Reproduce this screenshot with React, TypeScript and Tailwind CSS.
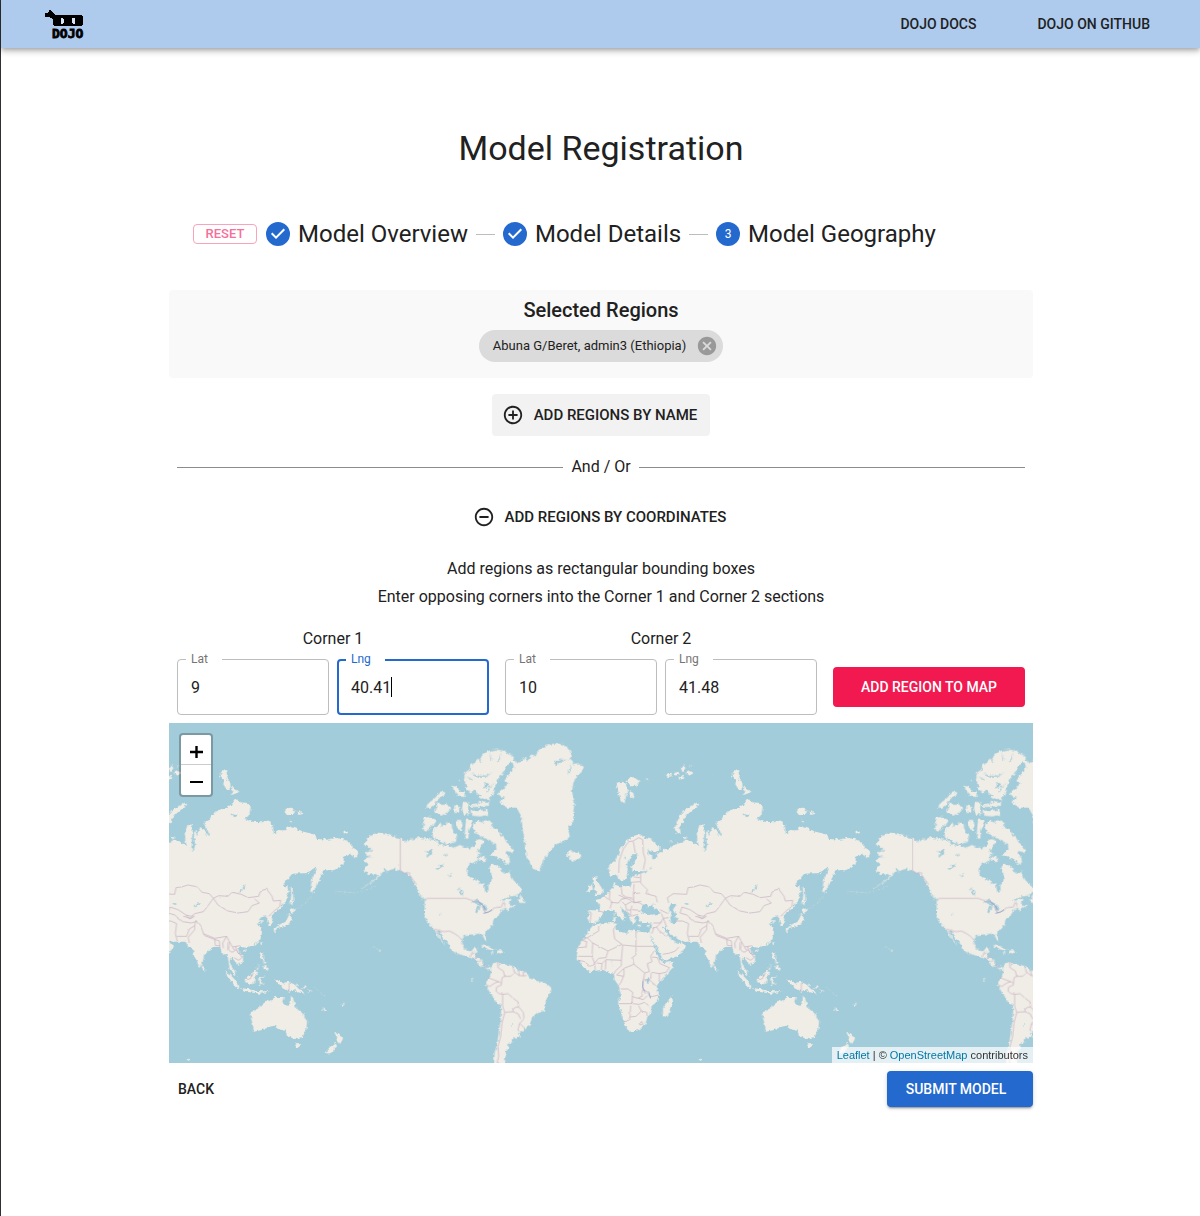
import React, { useState } from "react";
import { MdAddCircleOutline, MdCancel, MdRemoveCircleOutline } from "react-icons/md";

/* ---------- Logo ---------- */

function DojoLogo() {
  return (
    <svg viewBox="0 0 40 32" className="h-8 w-10" role="img" aria-label="Dojo">
      <path
        d="M1 5h3V4h1V2h2v1h1v1h1v1h1v1h1v1h27v1h1v9h-1v1H10v-1H9v-6H8v-1H6V9H1z"
        fill="#000"
      />
      <path d="M17 10h2v1h1v4h-1v1h-2zM28 10h3v6h-2v-1h-1z" fill="#d5e5f7" />
      <text
        x="8"
        y="30"
        fontFamily="DejaVu Sans Mono, monospace"
        fontWeight="700"
        fontSize="13"
        stroke="#000"
        strokeWidth="0.8"
      >
        DOJO
      </text>
    </svg>
  );
}

/* ---------- World map ---------- */

const americasLand = [
  "M10,362L22,352 20,345 40,335 55,329 75,334 95,339 121,346 133,354 140,358 150,350 163,348 178,342 190,350 200,346 225,352 240,366 262,368 282,374 300,366 312,372 330,376 344,366 352,350 362,348 372,352 368,366 360,374 352,384 362,392 350,404 356,410 345,418 330,422 321,432 320,448 330,464 345,470 362,482 372,486 374,500 380,510 386,502 385,486 394,474 396,455 388,440 391,424 404,424 418,432 424,444 433,456 445,450 448,440 452,458 462,474 474,484 484,498 483,510 470,518 446,520 425,530 424,536 440,528 455,528 452,534 446,540 456,550 466,546 462,552 448,560 438,562 440,554 432,556 424,564 420,574 412,580 400,588 398,606 388,618 378,624 374,634 380,648 380,656 374,650 368,636 355,632 340,634 322,635 308,642 306,660 312,676 325,684 336,684 340,676 350,674 350,684 346,692 345,704 358,704 368,712 366,728 372,734 384,730 392,734 390,740 380,736 368,734 358,724 346,710 330,702 316,698 300,694 275,682 270,668 255,652 246,638 238,624 230,620 236,634 246,652 256,666 248,660 236,642 228,628 222,616 208,606 200,594 193,580 194,556 194,534 200,530 186,520 176,508 168,488 158,470 144,456 132,446 118,442 98,438 82,446 74,436 66,450 58,460 40,474 20,488 6,498 4,496 24,484 44,466 56,458 44,452 30,456 20,446 10,444 16,432 24,424 14,416 16,404 36,402 20,398 12,388 22,384 34,386 36,376 20,372Z",
  "M330,130L345,118 360,104 372,92 388,84 408,80 430,82 452,94 462,104 456,118 440,128 430,146 420,160 410,176 404,196 396,216 388,232 366,224 352,214 344,200 334,212 322,204 318,188 312,168 316,148 330,138Z",
  "M328,245L345,246 360,236 380,240 388,236 386,248 352,252 332,252ZM332,262L350,264 382,260 384,276 360,280 335,278Z",
  "M240,210L256,204 252,218 240,224 230,232 222,246 210,254 198,254 208,238 222,228Z",
  "M232,236L246,246 262,244 270,256 262,268 244,278 226,272 222,262 232,258Z",
  "M274,188L290,190 300,206 312,206 318,220 306,222 292,216 284,206Z",
  "M282,250L290,246 298,254 296,270 284,270ZM310,236L326,238 324,256 326,272 312,276 306,256ZM296,170L302,172 300,180Z",
  "M190,284L212,282 230,292 222,304 210,314 198,326 188,322 192,304Z",
  "M240,300L246,312 262,298 274,304 280,326 290,340 288,356 270,362 248,360 232,350 220,346 216,328 226,314Z",
  "M288,292L302,290 308,304 304,322 292,318ZM318,290L334,290 332,310 324,322 326,340 320,350 314,336 316,310Z",
  "M344,300L356,292 366,300 374,292 388,292 398,302 396,314 410,318 420,332 432,344 440,358 452,368 460,382 456,392 444,384 436,390 448,404 450,418 440,424 430,410 416,408 404,398 392,398 400,386 410,380 408,366 396,356 380,348 366,340 346,330 340,316Z",
  "M362,398L372,402 382,414 368,414 356,410Z",
  "M455,112L462,110 470,122 484,112 498,104 502,116 514,94 530,100 532,84 550,72 580,62 612,64 625,78 636,96 628,108 645,124 660,124 672,132 664,148 652,156 640,180 636,205 644,236 640,268 640,295 622,312 630,340 615,354 585,366 570,385 556,400 546,420 538,446 518,436 505,410 496,385 494,350 488,320 484,280 470,254 440,254 418,236 432,226 412,212 428,200 445,180 434,168 452,150 462,130Z",
  "M622,390L632,384 642,390 656,386 665,398 656,408 640,414 628,408 632,400 620,398Z",
  "M392,734L400,722 414,716 418,724 432,724 455,728 470,738 482,746 500,748 508,764 530,774 556,780 572,792 574,804 560,824 556,846 552,864 530,872 516,882 512,898 498,916 490,926 476,924 480,938 472,946 456,946 456,958 444,964 446,974 436,984 440,996 432,1008 434,1024 402,1024 404,990 412,960 416,930 422,890 424,850 404,834 392,812 378,788 380,770 390,762 394,748Z",
  "M362,668L376,665 392,673 408,680 396,683 380,677ZM410,683L424,681 434,688 414,691ZM390,687L400,687 399,692ZM474,534L484,514 486,526 498,540 480,540ZM178,512L192,528 186,528ZM56,680L63,682 60,687ZM333,768L339,770 335,775Z",
];

const oldWorldLand = [
  "M146,432L158,418 172,404 180,384 190,366 204,350 222,338 240,334 256,344 276,350 298,370 298,382 284,388 268,384 262,378 266,392 276,398 278,410 292,404 290,392 304,388 316,376 326,380 340,366 360,360 378,350 400,358 416,370 412,350 410,328 418,308 430,304 434,320 432,348 430,380 436,384 442,366 438,340 440,318 448,340 456,312 470,320 480,342 482,330 474,312 468,296 484,290 492,276 510,262 534,254 552,244 562,228 576,238 598,240 608,252 604,276 590,288 612,296 640,298 664,292 674,306 678,332 694,322 714,322 720,308 748,318 766,326 800,334 806,348 840,350 860,344 884,348 904,358 920,378 932,386 926,404 914,398 900,392 886,402 888,420 876,430 858,442 826,442 818,464 804,490 793,513 788,495 792,468 806,442 803,432 782,450 733,452 713,475 703,488 718,490 722,508 713,535 698,555 683,568 668,575 675,595 671,610 661,606 661,590 653,580 641,582 631,592 648,592 630,602 643,625 638,648 618,665 595,674 578,672 568,680 585,698 585,715 571,726 561,715 549,702 545,718 553,735 563,748 565,758 555,752 545,738 541,715 539,695 527,698 521,680 513,672 498,672 481,684 467,698 465,715 457,732 449,722 439,698 433,676 421,672 413,656 391,656 370,656 352,648 346,640 334,636 326,624 316,608 308,614 322,634 332,648 344,658 356,664 360,656 378,668 368,688 350,700 330,708 310,714 304,700 290,672 278,650 270,632 274,616 276,602 262,600 245,600 236,588 238,580 222,582 228,594 220,606 214,592 208,578 198,564 184,552 186,566 196,582 204,586 194,584 192,596 186,590 172,578 164,562 152,560 142,564 130,566 128,574 118,586 112,598 98,602 88,598 84,590 88,562 108,562 118,564 120,548 108,532 118,528 134,520 150,502 158,492 164,478 168,486 178,490 212,490 216,478 214,468 222,456 240,452 256,446 240,444 218,444 214,430 228,410 232,394 218,394 208,410 198,430 206,446 196,468 188,478 180,474 172,452 164,456 150,458Z",
  "M100,606L120,604 144,598 160,598 168,602 166,618 180,626 204,632 208,620 228,624 252,628 270,628 272,644 284,672 290,692 302,712 310,720 328,718 342,716 336,736 318,758 298,780 290,792 296,808 296,832 274,850 274,866 262,880 258,898 246,914 232,922 206,926 198,912 190,888 182,862 174,840 182,816 176,788 164,770 162,752 146,750 126,740 104,744 90,748 72,734 58,716 50,704 54,672 66,652 82,632 88,620Z",
  "M334,820L339,832 331,858 322,882 309,879 309,856 322,838Z",
  "M98,462L112,460 108,474 118,484 128,500 126,514 104,518 112,506 100,498 106,486 98,478ZM84,488L96,484 98,500 82,508Z",
  "M168,180L186,176 200,184 204,200 198,220 194,242 182,232 176,212ZM204,168L220,162 238,174 230,188 214,190 200,176ZM210,200L222,214 218,228 208,212Z",
  "M318,156L334,152 336,160 322,162ZM342,150L356,146 358,156 346,158ZM362,140L372,126 376,136 368,148ZM376,150L390,144 400,148 386,158ZM356,162L370,158 368,168 358,170ZM388,126L396,128 390,132ZM258,166L266,168 260,171ZM460,150L464,152 460,154Z",
  "M344,318L350,298 360,278 372,262 392,250 412,238 417,246 394,264 378,278 368,296 360,314 362,334 348,328Z",
  "M520,146L532,142 540,156 536,168 546,176 548,196 536,200 526,184 528,168 516,158ZM552,188L572,208 552,216Z",
  "M708,260L722,254 742,262 736,276 716,276ZM748,264L766,272 754,276ZM724,290L732,292 730,300ZM886,328L896,324 902,330 890,332ZM370,340L380,344 374,350ZM328,354L334,352 334,360Z",
  "M728,490L734,498 736,530 732,548 727,540 730,514ZM724,562L730,552 744,562 732,570ZM726,572L732,588 722,604 700,612 684,616 686,624 680,628 677,616 700,604 716,594 721,576Z",
  "M635,660L643,656 640,670ZM588,682L596,679 593,689ZM463,726L472,738 468,744 461,740ZM635,690L645,687 645,702 653,716 639,709ZM646,728L662,732 658,744 647,738ZM645,714L657,720 650,726ZM625,740L637,722 629,741Z",
  "M530,745L546,754 564,774 577,798 560,789 543,766ZM576,795L600,798 620,803 640,805 663,805 640,812 600,807Z",
  "M590,766L604,762 618,744 631,746 622,762 622,776 610,784 592,778ZM631,768L652,760 637,772 649,786 640,782 633,792Z",
  "M682,772L694,770 704,782 720,776 744,786 758,800 770,812 750,808 736,800 724,806 708,796 698,788ZM762,796L776,788 770,800Z",
  "M609,868L631,856 645,842 661,832 669,836 679,822 707,822 703,840 719,850 727,844 729,816 737,832 745,856 765,872 777,896 775,918 763,942 739,948 721,940 709,922 697,920 681,908 659,912 639,922 617,926 615,906 609,886ZM740,960L757,961 752,975 743,971Z",
  "M860,926L872,937 886,944 877,963 866,951ZM862,959L867,970 848,991 833,991 842,976ZM822,852L837,864 830,865ZM879,847L891,837 886,849ZM777,797L793,806 788,809ZM161,583L167,583 166,595 159,593ZM161,569L166,571 163,581ZM231,605L245,605 236,611ZM261,608L271,603 266,612ZM415,1007L425,1008 422,1015Z",
];

const islandChains =
  "M690,0M863,505L900,508 930,508 962,498 985,488M737,560L760,550 775,536 790,520M797,790L815,806 836,824M620,738L634,718M880,848L884,842M975,670L992,680M155,712L157,728";

const americasWater =
  "M194,384L206,386 220,378 216,390 206,400 198,398 204,390ZM226,436L240,430 252,422 246,434 232,440ZM294,494L300,496 310,516 302,516ZM334,536L348,530 360,536 372,546 360,546 348,542ZM350,552L360,546 356,562 350,574 346,566ZM366,548L376,548 384,556 376,564 370,560ZM240,572L246,576 242,578ZM454,902L460,906 454,908ZM252,396L264,392 258,400ZM264,458L278,450 270,462ZM334,150L352,158 376,160 396,146 378,164 350,164ZM376,176L390,190 372,196ZM580,118L602,110 628,112 604,116 588,126ZM622,156L634,120 630,146ZM350,90L366,116 362,118ZM388,86L396,112 392,112ZM424,84L418,116 414,114ZM318,160L338,168 336,172ZM404,176L382,208 380,204Z";

const oldWorldWater =
  "M244,570L242,558 250,544 260,546 262,554 272,548 276,544 284,540 276,550 292,562 304,572 284,574 262,576ZM326,556L332,544 350,542 344,552 338,562 350,572 344,580 352,584 350,600 336,600 330,588 334,576ZM376,540L386,542 378,546ZM436,550L444,542 460,540 446,548ZM568,508L582,498 592,482 590,494 578,508ZM258,768L270,766 270,776 262,780ZM250,442L262,444 256,452ZM272,428L276,438 270,434ZM196,400L198,410 193,404ZM550,270L572,274 560,284Z";

const americasBorders =
  "M121,346V442L132,452 144,448 154,464 170,484M200,526H318L336,532 356,536 372,556 376,570 396,562 402,554 424,552 428,540 434,540 434,550M222,618L252,626 268,624 284,632 296,640 306,652M332,700L336,688 344,688M344,706L358,700M356,716L366,712M372,722L374,734M412,716L414,734 430,744 434,760 426,764 424,786 410,792 408,804 418,812 428,814M434,760L452,760 464,748 460,736M464,748L478,758 500,758M476,744L478,758M490,746L490,760M384,764L400,770 416,776 404,780 390,790 378,786M416,776L424,780M428,814L444,812 462,828 474,836 476,852 462,854 458,866 434,868 428,850ZM476,852L490,868 492,888 478,902 474,924M458,866L474,872 482,888M480,902L494,916M434,868L426,900 422,940 414,970 416,1000 410,1024";

const oldWorldBorders = [
  "M326,540L322,524 340,512 380,514 384,494 400,492 420,486 450,492 462,508 484,512 496,526 480,548 466,566 440,572 430,580 414,576 390,560 366,552 360,570",
  "M496,526L512,518 540,520 552,508 580,514 600,524 632,520 636,504 656,498 672,520 676,534 698,532 696,550 678,564 662,580M496,526L510,546 540,564 570,570 600,566 612,548 634,540 620,528",
  "M360,570L380,576 404,596 430,600 444,596M350,594L368,594 386,602 382,632 388,654M386,640L416,640 424,618 440,608 444,592 462,618 466,632 500,646 536,640 544,656 554,672 576,668M440,608L440,620 420,644 424,660M466,632L470,638 502,650M500,648L502,668 516,668M502,650L514,654 516,676M536,640L524,660 526,676M544,656L542,680 550,688 562,680 574,690 582,704 572,712 558,704M554,672L560,684M562,670L568,684 580,696M414,576L424,588 440,580M406,580L430,586 436,576",
  "M176,450L178,412 190,378 206,356 220,354 236,344 248,350M220,356L226,390M248,350L250,390 256,410 250,440M242,450L242,480 262,500 258,512 288,520 292,538M216,478L240,476M222,462L240,464M222,484L220,512 240,510M184,492L186,514 198,522 220,526M220,512L222,540 244,534M150,504L148,528 156,538M152,538L176,540 184,528 198,526M134,520L146,530M156,538L150,556M176,516L198,526 220,534M186,536L196,546 214,536 240,540 248,546M196,546L200,560 212,562 216,548M216,560L240,562M212,562L212,580 234,574M198,562L208,574M90,566L94,572 90,596M118,564L132,568",
  "M304,572L310,586 326,584M300,560L324,572M310,586L300,600 280,600M276,616L290,612 306,596M310,586L320,612M290,612L296,622 320,640M282,612L276,632M308,694L330,690 346,684 356,672M724,780V806M594,764L606,768 616,750",
  "M116,606L116,624 82,644 66,652M82,644L98,660 144,684 186,664 164,648 160,618 168,610M228,624V670L188,666M230,670H282M98,660L96,700 54,700M66,652L80,656 78,672 54,674M144,684L138,704 116,706 104,720M96,700L104,722 90,730 74,716 56,712M104,722L106,742M124,742L126,722 138,710 184,712 188,666M126,722L110,720M138,712L136,740M184,712L184,728 168,742 162,752M228,670L228,696 216,704 222,724 192,736 170,756M222,724L244,742 254,750 268,746 262,722 276,716 272,700 282,684M276,702L292,704 300,722 328,734 318,748 298,752 276,748M298,752L298,776M254,750L250,770 270,772 290,790M274,750L272,768M250,770L248,796 258,812M192,738L192,756 184,776 176,788M170,756L190,760M182,798L204,798 218,808 216,842H176M216,820L232,826 246,820 248,800 262,806 270,822 296,816M216,842L238,844 254,838 266,848M212,848L210,882 206,892 192,892M210,882L228,880 244,864 236,848M244,864L260,868 262,880M238,900L246,896 248,904 240,906ZM232,826L250,830 262,818",
];

function World() {
  return (
    <>
      <g fill="#f0ede6" filter="url(#coastline)">
        <g transform="translate(573 0)">
          {americasLand.map((d) => (
            <path key={d} d={d} />
          ))}
          <path d={americasWater} fill="#a3ccda" />
        </g>
        <g transform="translate(1173 0)">
          {oldWorldLand.map((d) => (
            <path key={d} d={d} />
          ))}
          <path d={oldWorldWater} fill="#a3ccda" />
          <path d={islandChains} fill="none" stroke="#cddcdd" strokeWidth="2" strokeDasharray="7 6" />
        </g>
      </g>
      <g fill="none" stroke="#c8b2c4" strokeWidth="2.2" strokeLinejoin="round" filter="url(#frontier)">
        <path transform="translate(573 0)" d={americasBorders} />
        <g transform="translate(1173 0)">
          {oldWorldBorders.map((d) => (
            <path key={d} d={d} />
          ))}
        </g>
      </g>
      <g fill="none" stroke="#8da3cc" strokeWidth="2.4" strokeLinejoin="round">
        <path transform="translate(573 0)" d="M356,536L370,548 376,560M370,571L386,567 396,560" />
        <path transform="translate(1173 0)" d="M249,774L248,792 254,804M266,806L272,826" />
      </g>
    </>
  );
}

function WorldMap() {
  return (
    <svg
      viewBox="0 0 2592 1020"
      preserveAspectRatio="xMidYMin slice"
      className="block h-full w-full"
      role="img"
      aria-label="World map"
    >
      <defs>
        <filter id="coastline" x="-2%" y="-2%" width="104%" height="104%">
          <feTurbulence type="fractalNoise" baseFrequency="0.1" numOctaves="2" seed="4" />
          <feDisplacementMap in="SourceGraphic" scale="13" xChannelSelector="R" yChannelSelector="G" />
        </filter>
        <filter id="frontier" x="-2%" y="-2%" width="104%" height="104%">
          <feTurbulence type="fractalNoise" baseFrequency="0.05" numOctaves="1" seed="9" />
          <feDisplacementMap in="SourceGraphic" scale="7" xChannelSelector="R" yChannelSelector="G" />
        </filter>
      </defs>
      {[-1536, 0, 1536].map((shift) => (
        <g key={shift} transform={`translate(${shift} 0)`}>
          <World />
        </g>
      ))}
    </svg>
  );
}

function MapPanel() {
  return (
    <div className="relative h-[340px] overflow-hidden bg-[#a3ccda]">
      <WorldMap />
      <div className="absolute top-2.5 left-2.5 flex flex-col rounded border-2 border-black/25 bg-white bg-clip-padding">
        <button type="button" aria-label="Zoom in" className="flex h-[30px] w-[30px] items-center justify-center border-b border-[#ccc]">
          <svg viewBox="0 0 14 14" className="mt-1 h-3.5 w-3.5 stroke-black" strokeWidth="2.4">
            <path d="M7.5 1v12M1 7h13" />
          </svg>
        </button>
        <button type="button" aria-label="Zoom out" className="flex h-[30px] w-[30px] items-center justify-center">
          <svg viewBox="0 0 14 14" className="mt-1 h-3.5 w-3.5 stroke-black" strokeWidth="2">
            <path d="M1 7h13" />
          </svg>
        </button>
      </div>
      <p className="absolute right-0 bottom-0 bg-white/70 px-[5px] font-['Liberation_Sans',sans-serif] text-[11px] leading-4 text-[#333]">
        <a href="#leaflet" className="text-[#0078a8]">Leaflet</a> | ©{" "}
        <a href="#openstreetmap" className="text-[#0078a8]">OpenStreetMap</a> contributors
      </p>
    </div>
  );
}

/* ---------- Stepper ---------- */

function StepIcon({ step, done }: { step: number; done: boolean }) {
  if (done) {
    return (
      <svg viewBox="0 0 24 24" className="h-6 w-6 shrink-0 fill-[#2469ce]" aria-hidden="true">
        <path d="M12 0a12 12 0 1 0 0 24 12 12 0 0 0 0-24zm-2 17l-5-5 1.4-1.4 3.6 3.6 7.6-7.6L19 8l-9 9z" />
      </svg>
    );
  }
  return (
    <span className="flex h-6 w-6 shrink-0 items-center justify-center rounded-full bg-[#2469ce] text-xs text-white">
      {step}
    </span>
  );
}

const steps = [
  { label: "Model Overview", done: true },
  { label: "Model Details", done: true },
  { label: "Model Geography", done: false },
];

function Stepper() {
  return (
    <div className="mt-[30px] flex items-center px-6 py-6">
      <button
        type="button"
        className="mr-[9px] h-5 w-16 rounded border border-[#f9a3bd] text-[13px] leading-4 font-medium text-[#f5709a]"
      >
        RESET
      </button>
      <ol className="flex items-center gap-2">
        {steps.map((step, i) => (
          <li key={step.label} className="flex items-center gap-2">
            {i > 0 && <span className="h-px w-[19px] bg-[#bdbdbd]" />}
            <StepIcon step={i + 1} done={step.done} />
            <span className="text-2xl leading-6 whitespace-nowrap">{step.label}</span>
          </li>
        ))}
      </ol>
    </div>
  );
}

/* ---------- Coordinates form ---------- */

type FieldProps = { id: string; label: string; initial: string; active?: boolean };

function CoordinateField({ id, label, initial, active = false }: FieldProps) {
  const [value, setValue] = useState(initial);
  return (
    <div className="relative min-w-0 flex-1">
      <label
        htmlFor={id}
        className={
          active
            ? "absolute -top-2 left-[9px] bg-white pr-3.5 pl-[5px] text-xs leading-4 text-[#2469ce]"
            : "absolute -top-2 left-[9px] bg-white pr-3.5 pl-[5px] text-xs leading-4 text-[#757575]"
        }
      >
        {label}
      </label>
      <input
        id={id}
        type="text"
        value={value}
        onChange={(e) => setValue(e.target.value)}
        className={
          active
            ? "h-14 w-full rounded border-2 border-[#2469ce] px-3 text-base outline-none"
            : "h-14 w-full rounded border border-[#bdbdbd] px-[13px] text-base outline-none"
        }
      />
      {active && (
        <span className="pointer-events-none absolute top-[18px] left-3.5 flex items-center" aria-hidden="true">
          <span className="invisible text-base leading-5">{value}</span>
          <span className="h-5 w-px bg-black" />
        </span>
      )}
    </div>
  );
}

function Corner({ number, lat, lng, active }: { number: number; lat: string; lng: string; active?: boolean }) {
  return (
    <fieldset className="min-w-0 flex-[312]">
      <legend className="mx-auto block text-base leading-7">Corner {number}</legend>
      <div className="mt-1.5 flex gap-2">
        <CoordinateField id={`lat-${number}`} label="Lat" initial={lat} />
        <CoordinateField id={`lng-${number}`} label="Lng" initial={lng} active={active} />
      </div>
    </fieldset>
  );
}

/* ---------- Page ---------- */

export default function App() {
  return (
    <div className="min-h-screen border-l border-[#303034] bg-white font-[Roboto,sans-serif] text-[#212121]">
      <header className="flex h-12 items-center justify-between bg-[#aecbee] pr-[50px] pl-[43px] shadow-[0_2px_4px_-1px_rgba(0,0,0,0.2),0_4px_5px_0_rgba(0,0,0,0.14),0_1px_10px_0_rgba(0,0,0,0.12)]">
        <a href="#home">
          <DojoLogo />
        </a>
        <nav className="flex gap-[61px] text-sm font-medium">
          <a href="#docs">DOJO DOCS</a>
          <a href="#github">DOJO ON GITHUB</a>
        </nav>
      </header>

      <div className="pl-px">
        <main className="mx-auto max-w-[864px] pt-20 pb-16">
          <h1 className="text-center text-[34px] leading-10">Model Registration</h1>

          <Stepper />

          <section className="mt-5 rounded bg-[#f9f9f9] pt-1.5 pb-4 text-center">
            <h2 className="text-xl leading-7 font-medium">Selected Regions</h2>
            <div className="mt-1.5 inline-flex h-8 items-center gap-2.5 rounded-full bg-[#dbdbdb] pr-[5px] pl-3.5 align-top">
              <span className="text-[13px]">Abuna G/Beret, admin3 (Ethiopia)</span>
              <button type="button" aria-label="Remove region">
                <MdCancel size={22} className="block text-[#999]" />
              </button>
            </div>
          </section>

          <div className="mt-4 flex justify-center">
            <button
              type="button"
              className="flex h-[42px] items-center gap-2.5 rounded bg-[#f2f2f2] pr-[13px] pl-2.5 text-[15px] font-medium"
            >
              <MdAddCircleOutline size={22} />
              ADD REGIONS BY NAME
            </button>
          </div>

          <div className="mt-[17px] flex items-center gap-2 px-2 leading-7">
            <span className="h-px flex-1 bg-[#8c8c8c]" />
            And / Or
            <span className="h-px flex-1 bg-[#8c8c8c]" />
          </div>

          <div className="mt-[15px] flex justify-center">
            <button
              type="button"
              className="flex h-[42px] items-center gap-2.5 rounded pr-[13px] pl-2.5 text-[15px] font-medium"
            >
              <MdRemoveCircleOutline size={22} />
              ADD REGIONS BY COORDINATES
            </button>
          </div>

          <div className="mt-[17px] text-center leading-7">
            <p>Add regions as rectangular bounding boxes</p>
            <p>Enter opposing corners into the Corner 1 and Corner 2 sections</p>
          </div>

          <form className="mt-3.5 flex items-end gap-4 px-2 pb-2" onSubmit={(e) => e.preventDefault()}>
            <Corner number={1} lat="9" lng="40.41" active />
            <Corner number={2} lat="10" lng="41.48" />
            <div className="flex-[192] pb-2">
              <button type="submit" className="h-10 w-full rounded bg-[#f11950] text-sm font-medium text-white">
                ADD REGION TO MAP
              </button>
            </div>
          </form>

          <MapPanel />

          <div className="mt-2 flex items-center justify-between">
            <button type="button" className="h-9 px-[9px] text-sm font-medium">
              BACK
            </button>
            <button
              type="button"
              className="h-9 w-[146px] rounded bg-[#2469ce] pr-2 text-sm font-medium text-white shadow-[0_3px_1px_-2px_rgba(0,0,0,0.2),0_2px_2px_0_rgba(0,0,0,0.14),0_1px_5px_0_rgba(0,0,0,0.12)]"
            >
              SUBMIT MODEL
            </button>
          </div>
        </main>
      </div>
    </div>
  );
}
